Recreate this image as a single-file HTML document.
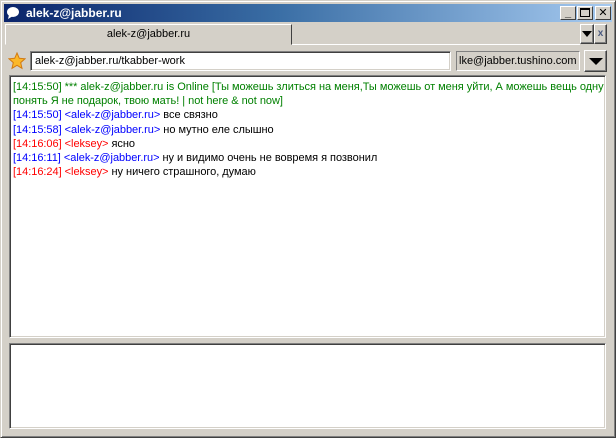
<!DOCTYPE html>
<html><head><meta charset="utf-8"><style>
*{margin:0;padding:0;box-sizing:border-box}
body{width:616px;height:438px;background:#d4d0c8;position:relative;overflow:hidden;font-family:Tahoma,"Liberation Sans","DejaVu Sans",sans-serif;font-size:11px}
.abs{position:absolute}
#frame{left:0;top:0;width:616px;height:438px;border:1px solid;border-color:#d4d0c8 #404040 #404040 #d4d0c8;box-shadow:inset 1px 1px 0 #fff,inset -1px -1px 0 #808080}
#title{left:4px;top:4px;width:608px;height:18px;background:linear-gradient(to right,#0a246a,#3a6ea5 45%,#a6caf0);color:#fff;font-weight:bold;font-size:12px;line-height:18px;padding-left:22px}
.tb{top:6px;width:16px;height:14px;background:#d4d0c8;border:1px solid;border-color:#fff #404040 #404040 #fff;font-size:11px;font-weight:bold;color:#000;text-align:center;line-height:12px}
.btn{background:#d4d0c8;border:1px solid;border-color:#fff #404040 #404040 #fff;box-shadow:inset -1px -1px 0 #808080}
.sunk{border:1px solid;border-color:#808080 #fff #fff #808080;box-shadow:inset 1px 1px 0 #404040,inset -1px -1px 0 #d4d0c8;background:#fff}
.line{white-space:nowrap;letter-spacing:-0.03px}
.b{color:#0000ff}.r{color:#ff0000}.g{color:#008000}
</style></head><body>
<div id="frame" class="abs"></div>
<div id="title" class="abs">alek-z@jabber.ru</div>
<svg class="abs" style="left:6px;top:6px" width="14" height="14" viewBox="0 0 14 14"><ellipse cx="7" cy="6" rx="6" ry="5" fill="#fff"/><path d="M3 9 L2 13 L7 10Z" fill="#fff"/></svg>
<div class="abs tb" style="left:560px">_</div>
<div class="abs tb" style="left:577px"><div style="width:10px;height:9px;border:1px solid #000;border-top-width:2px;margin:1px auto 0"></div></div>
<div class="abs tb" style="left:595px">✕</div>
<div class="abs" style="left:5px;top:24px;width:287px;height:21px;border:1px solid;border-color:#fff #404040 #d4d0c8 #fff;text-align:center;line-height:18px">alek-z@jabber.ru</div>
<div class="abs" style="left:292px;top:44px;width:288px;height:1px;background:#fff"></div>
<div class="abs btn" style="left:580px;top:24px;width:14px;height:20px"><div style="margin:6px auto 0;width:0;height:0;border-left:5px solid transparent;border-right:5px solid transparent;border-top:6px solid #000"></div></div>
<div class="abs btn" style="left:594px;top:24px;width:13px;height:20px;color:#4a5a80;font-weight:bold;text-align:center;line-height:17px;font-size:10px">x</div>
<svg class="abs" style="left:8px;top:52px" width="18" height="18" viewBox="0 0 18 18"><path d="M9 1 L11.3 6.3 L17 6.8 L12.7 10.6 L14 16.3 L9 13.3 L4 16.3 L5.3 10.6 L1 6.8 L6.7 6.3Z" fill="#fbb829" stroke="#d27a12" stroke-width="1"/></svg>
<div class="abs sunk" style="left:30px;top:51px;width:421px;height:20px;padding:2px 4px;line-height:14px">alek-z@jabber.ru/tkabber-work</div>
<div class="abs" style="left:456px;top:51px;width:124px;height:20px;border:1px solid;border-color:#808080 #fff #fff #808080;padding:2px 2px;line-height:14px;background:#d4d0c8">lke@jabber.tushino.com</div>
<div class="abs btn" style="left:584px;top:50px;width:23px;height:22px"><div style="margin:7px auto 0;width:0;height:0;border-left:7px solid transparent;border-right:7px solid transparent;border-top:7px solid #000"></div></div>
<div class="abs sunk" style="left:9px;top:75px;width:597px;height:263px;padding:4px 3px;line-height:14.2px">
<div class="line g">[14:15:50] *** alek-z@jabber.ru is Online [Ты можешь злиться на меня,Ты можешь от меня уйти, А можешь вещь одну</div>
<div class="line g">понять Я не подарок, твою мать! | not here &amp; not now]</div>
<div class="line"><span class="b">[14:15:50] &lt;alek-z@jabber.ru&gt;</span> все связно</div>
<div class="line"><span class="b">[14:15:58] &lt;alek-z@jabber.ru&gt;</span> но мутно еле слышно</div>
<div class="line"><span class="r">[14:16:06] &lt;leksey&gt;</span> ясно</div>
<div class="line"><span class="b">[14:16:11] &lt;alek-z@jabber.ru&gt;</span> ну и видимо очень не вовремя я позвонил</div>
<div class="line"><span class="r">[14:16:24] &lt;leksey&gt;</span> ну ничего страшного, думаю</div>
</div>
<div class="abs sunk" style="left:9px;top:343px;width:597px;height:86px"></div>
</body></html>
